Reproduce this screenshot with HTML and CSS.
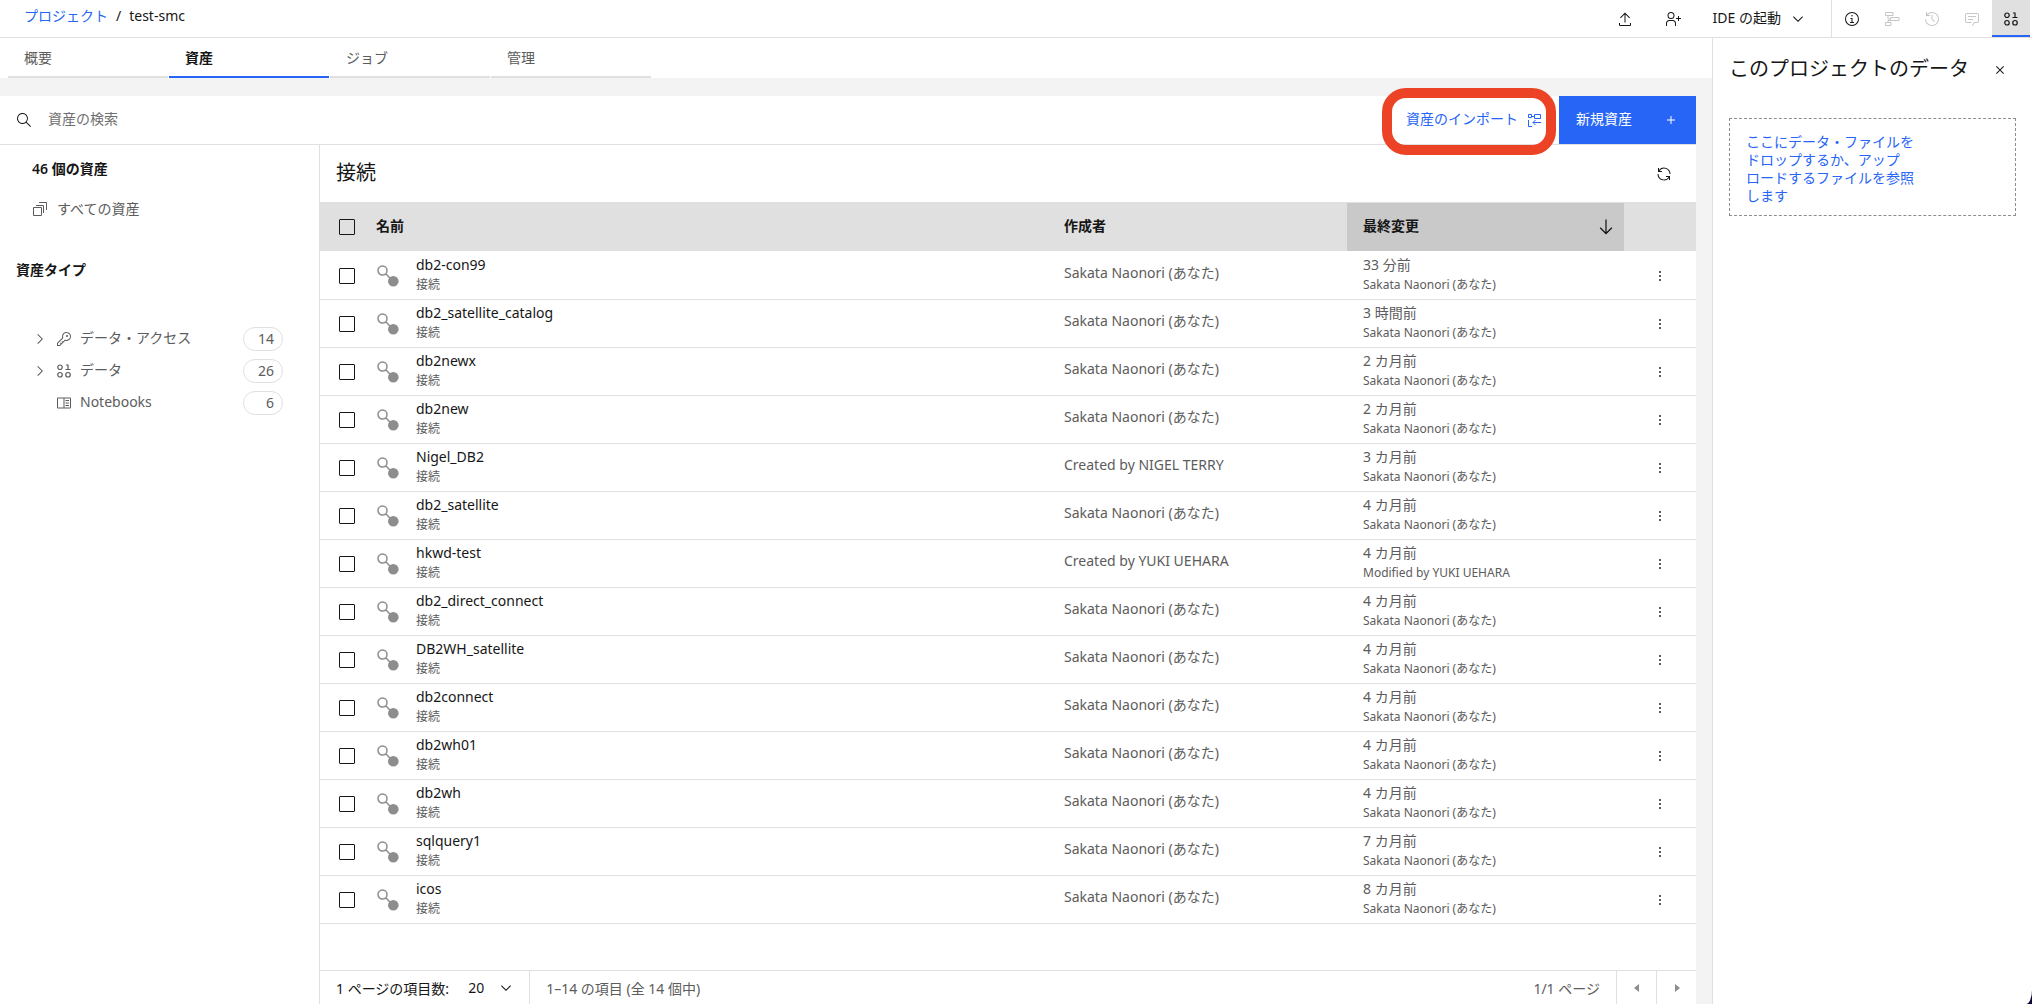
FILE: index.html
```
<!DOCTYPE html>
<html lang="ja">
<head>
    <meta charset="UTF-8">
    <meta name="viewport" content="width=device-width, initial-scale=1.0">
    <title>test-smc</title>
    <link rel="stylesheet" href="styles.css">
</head>
<body>
    <svg class="sprite" aria-hidden="true">
        <symbol id="i-share" viewBox="0 0 32 32"><path d="M6 13l1.410 1.410L15 6.830V23h2V6.830l7.590 7.580L26 13 16 3zM26 24v4H6v-4H4v4a2 2 0 002 2h20a2 2 0 002-2v-4z"/></symbol>
        <symbol id="i-user" viewBox="0 0 32 32"><path d="M32 14h-4v-4h-2v4h-4v2h4v4h2v-4h4zM12 4a5 5 0 11-5 5 5 5 0 015-5m0-2a7 7 0 107 7 7 7 0 00-7-7zM22 30h-2v-5a5 5 0 00-5-5H9a5 5 0 00-5 5v5H2v-5a7 7 0 017-7h6a7 7 0 017 7z"/></symbol>
        <symbol id="i-down" viewBox="0 0 16 16"><path d="M8 11L3 6l.7-.7L8 9.600l4.300-4.300.7.7z"/></symbol>
        <symbol id="i-right" viewBox="0 0 16 16"><path d="M11 8l-5 5-.7-.7L9.600 8 5.300 3.700 6 3z"/></symbol>
        <symbol id="i-info" viewBox="0 0 32 32"><path d="M17 22v-8h-4v2h2v6h-3v2h8v-2zM16 8a1.500 1.500 0 101.500 1.500A1.500 1.500 0 0016 8z"/><path d="M16 30a14 14 0 1114-14 14 14 0 01-14 14zm0-26a12 12 0 1012 12A12 12 0 0016 4z"/></symbol>
        <symbol id="i-flow" viewBox="0 0 32 32"><path fill="none" stroke="currentColor" stroke-width="2" d="M3 3h15v6H3zM13 13h17v6H13zM3 23h11v6H3zM8 9v7h5M8 23v-4h5"/></symbol>
        <symbol id="i-history" viewBox="0 0 32 32"><path d="M20.590 22L15 16.410V7h2v8.580l5 5.010zM16 2A13.940 13.940 0 006 6.230V2H4v8h8V8H7.080A12 12 0 114 16H2A14 14 0 1016 2z"/></symbol>
        <symbol id="i-chat" viewBox="0 0 32 32"><path d="M17.740 30L16 29l4-7h6a2 2 0 002-2V8a2 2 0 00-2-2H6a2 2 0 00-2 2v12a2 2 0 002 2h9v2H6a4 4 0 01-4-4V8a4 4 0 014-4h20a4 4 0 014 4v12a4 4 0 01-4 4h-4.840z"/><path d="M8 10h16v2H8zM8 16h10v2H8z"/></symbol>
        <symbol id="i-data" viewBox="0 0 32 32"><path fill="none" stroke="currentColor" stroke-width="2.400" d="M19 13h10M24 13V4h-4"/><g fill="none" stroke="currentColor" stroke-width="2.400"><circle cx="8" cy="8.500" r="4.500"/><circle cx="8" cy="23.500" r="4.500"/><circle cx="24" cy="23.500" r="4.500"/></g></symbol>
        <symbol id="i-search" viewBox="0 0 16 16"><path d="M15 14.300L10.700 10c1.900-2.300 1.600-5.800-.7-7.700S4.200.7 2.300 3 .7 8.800 3 10.700c2 1.700 5 1.700 7 0l4.300 4.300zM2 6.500C2 4 4 2 6.500 2S11 4 11 6.500 9 11 6.500 11 2 9 2 6.500z"/></symbol>
        <symbol id="i-close" viewBox="0 0 32 32"><path d="M24 9.400L22.600 8 16 14.600 9.400 8 8 9.400l6.600 6.600L8 22.600 9.400 24l6.600-6.600 6.600 6.600 1.400-1.400-6.600-6.600z"/></symbol>
        <symbol id="i-add" viewBox="0 0 32 32"><path d="M17 15V8h-2v7H8v2h7v7h2v-7h7v-2z"/></symbol>
        <symbol id="i-import" viewBox="0 0 16 16"><path fill="none" stroke="currentColor" d="M2.500 2.500h3v3h-3zM8.500 2.500h6v4h-6zM5.500 4.500h3M2.500 8v6.500H6M15 10.500H7M9.500 8L7 10.500 9.500 13"/></symbol>
        <symbol id="i-renew" viewBox="0 0 32 32"><path d="M12 10H6.780A11 11 0 0127 16h2A13 13 0 006 7.680V4H4v8h8zM20 22h5.220A11 11 0 015 16H3a13 13 0 0023 8.320V28h2v-8h-8z"/></symbol>
        <symbol id="i-stack" viewBox="0 0 16 16"><path fill="none" stroke="currentColor" d="M1.500 6.500h8v8h-8zM4 4.500h7.500V12M7 1.500h7.500V9"/></symbol>
        <symbol id="i-key" viewBox="0 0 32 32"><path d="M21 2a9 9 0 00-9 9 8.870 8.870 0 00.390 2.610L2 24v6h6l10.390-10.390A9 9 0 1021 2zm0 16a7 7 0 01-2-.300l-1.150-.350-.870.870-3.180 3.180L12.410 20 11 21.410l1.380 1.380-1.590 1.590L9.410 23 8 24.410l1.380 1.380L7.170 28H4v-3.170l9.800-9.800.870-.870-.350-1.150A7 7 0 1121 18z"/><circle cx="22" cy="10" r="2"/></symbol>
        <symbol id="i-book" viewBox="0 0 32 32"><path d="M19 10h7v2h-7zM19 15h7v2h-7zM19 20h7v2h-7z"/><path d="M28 5H4a2 2 0 00-2 2v18a2 2 0 002 2h24a2 2 0 002-2V7a2 2 0 00-2-2zM4 7h11v18H4zm13 18V7h11v18z"/></symbol>
        <symbol id="i-arrow" viewBox="0 0 32 32"><path d="M24.590 16.590L17 24.170V4h-2v20.170l-7.590-7.580L6 18l10 10 10-10z"/></symbol>
        <symbol id="i-conn" viewBox="0 0 22 22"><path fill="none" stroke="currentColor" stroke-width="1.500" d="M5.500 1a4.500 4.500 0 110 9 4.500 4.500 0 010-9zM8.700 8.700l5 5"/><circle cx="16.300" cy="16.300" r="5.300"/></symbol>
        <symbol id="i-dots" viewBox="0 0 16 16"><path d="M7 3h2v2H7zM7 7h2v2H7zM7 11h2v2H7z"/></symbol>
        <symbol id="i-prev" viewBox="0 0 16 16"><path d="M10 4v8L5 8z"/></symbol>
        <symbol id="i-next" viewBox="0 0 16 16"><path d="M6 4v8l5-4z"/></symbol>
    </svg>

    <header class="header">
        <nav class="breadcrumb">
            <a href="#">プロジェクト</a>
            <span>/</span>
            <span>test-smc</span>
        </nav>
        <div class="header-actions">
            <button class="icon-btn" aria-label="アップロード"><svg class="icon"><use href="#i-share"/></svg></button>
            <button class="icon-btn" aria-label="共同作業者の追加"><svg class="icon"><use href="#i-user"/></svg></button>
            <button class="ide-btn"><span class="label">IDE の起動</span> <svg class="icon"><use href="#i-down"/></svg></button>
        </div>
        <div class="header-tools">
            <button class="tool" aria-label="情報"><svg class="icon"><use href="#i-info"/></svg></button>
            <button class="tool" aria-label="フロー" disabled><svg class="icon"><use href="#i-flow"/></svg></button>
            <button class="tool" aria-label="履歴" disabled><svg class="icon"><use href="#i-history"/></svg></button>
            <button class="tool" aria-label="コメント" disabled><svg class="icon"><use href="#i-chat"/></svg></button>
            <button class="tool active" aria-label="データ"><svg class="icon"><use href="#i-data"/></svg></button>
        </div>
    </header>

    <div class="page">
        <main class="main">
            <nav class="tabs">
                <a class="tab" href="#">概要</a>
                <a class="tab active" href="#">資産</a>
                <a class="tab" href="#">ジョブ</a>
                <a class="tab" href="#">管理</a>
            </nav>

            <div class="workspace">
                <div class="toolbar">
                    <label class="search-label" for="search" aria-label="資産の検索"><svg class="icon"><use href="#i-search"/></svg></label>
                    <input class="search" id="search" type="text" placeholder="資産の検索">
                    <button class="import-btn"><span class="label">資産のインポート</span> <svg class="icon"><use href="#i-import"/></svg></button>
                    <button class="new-btn"><span class="label">新規資産</span> <svg class="icon"><use href="#i-add"/></svg></button>
                </div>

                <div class="content">
                    <aside class="sidebar">
                        <h2 class="asset-count">46 個の資産</h2>
                        <a class="all-assets" href="#"><svg class="icon"><use href="#i-stack"/></svg>すべての資産</a>
                        <h2 class="type-title">資産タイプ</h2>
                        <ul class="types">
                            <li>
                                <svg class="icon chevron"><use href="#i-right"/></svg>
                                <svg class="icon"><use href="#i-key"/></svg>
                                <a class="label" href="#">データ・アクセス</a>
                                <span class="badge">14</span>
                            </li>
                            <li>
                                <svg class="icon chevron"><use href="#i-right"/></svg>
                                <svg class="icon"><use href="#i-data"/></svg>
                                <a class="label" href="#">データ</a>
                                <span class="badge">26</span>
                            </li>
                            <li>
                                <span class="chevron"></span>
                                <svg class="icon"><use href="#i-book"/></svg>
                                <a class="label" href="#">Notebooks</a>
                                <span class="badge">6</span>
                            </li>
                        </ul>
                    </aside>

                    <section class="list">
                        <div class="list-header">
                            <h1>接続</h1>
                            <button class="icon-btn" aria-label="更新"><svg class="icon"><use href="#i-renew"/></svg></button>
                        </div>
                        <table class="table">
                            <colgroup>
                                <col class="col-check">
                                <col>
                                <col class="col-author">
                                <col class="col-date">
                                <col class="col-menu">
                            </colgroup>
                            <thead>
                                <tr>
                                    <th><input type="checkbox" aria-label="すべて選択"></th>
                                    <th><span class="label">名前</span></th>
                                    <th><span class="label">作成者</span></th>
                                    <th class="sorted"><button class="sort-btn"><span class="label">最終変更</span> <svg class="icon"><use href="#i-arrow"/></svg></button></th>
                                    <th></th>
                                </tr>
                            </thead>
                            <tbody id="rows"></tbody>
                        </table>
                        <footer class="pager">
                            <div class="page-size">
                                <label for="pageSize">1 ページの項目数:</label>
                                <span class="select-wrap">
                                    <select id="pageSize"><option>20</option><option>50</option></select>
                                    <svg class="icon"><use href="#i-down"/></svg>
                                </span>
                            </div>
                            <span class="range">1–14 の項目 (全 14 個中)</span>
                            <span class="page-no">1/1 ページ</span>
                            <button class="page-btn" aria-label="前のページ" disabled><svg class="icon"><use href="#i-prev"/></svg></button>
                            <button class="page-btn" aria-label="次のページ" disabled><svg class="icon"><use href="#i-next"/></svg></button>
                        </footer>
                    </section>
                </div>
            </div>
        </main>

        <aside class="panel">
            <div class="panel-header">
                <h2 class="label">このプロジェクトのデータ</h2>
                <button class="icon-btn" aria-label="閉じる"><svg class="icon"><use href="#i-close"/></svg></button>
            </div>
            <div class="dropzone">
                <a href="#">ここにデータ・ファイルを<br>ドロップするか、アップ<br>ロードするファイルを参照<br>します</a>
            </div>
        </aside>
    </div>

    <script>
        const me = 'Sakata Naonori (あなた)';
        const rows = [
            ['db2-con99', me, '33 分前', me],
            ['db2_satellite_catalog', me, '3 時間前', me],
            ['db2newx', me, '2 カ月前', me],
            ['db2new', me, '2 カ月前', me],
            ['Nigel_DB2', 'Created by NIGEL TERRY', '3 カ月前', me],
            ['db2_satellite', me, '4 カ月前', me],
            ['hkwd-test', 'Created by YUKI UEHARA', '4 カ月前', 'Modified by YUKI UEHARA'],
            ['db2_direct_connect', me, '4 カ月前', me],
            ['DB2WH_satellite', me, '4 カ月前', me],
            ['db2connect', me, '4 カ月前', me],
            ['db2wh01', me, '4 カ月前', me],
            ['db2wh', me, '4 カ月前', me],
            ['sqlquery1', me, '7 カ月前', me],
            ['icos', me, '8 カ月前', me]
        ];

        document.getElementById('rows').innerHTML = rows.map(([name, author, date, editor]) => `
            <tr>
                <td class="check"><input type="checkbox" aria-label="${name}"></td>
                <td>
                    <div class="asset">
                        <svg class="conn"><use href="#i-conn"/></svg>
                        <div><a href="#">${name}</a><small>接続</small></div>
                    </div>
                </td>
                <td class="author">${author}</td>
                <td>${date}<small>${editor}</small></td>
                <td class="menu"><button class="icon-btn" aria-label="メニュー"><svg class="icon"><use href="#i-dots"/></svg></button></td>
            </tr>`).join('');
    </script>
</body>
</html>
```
FILE: styles.css
```
:root {
    --blue: #2765f6;
    --text: #161616;
    --muted: #5c5c5c;
    --border: #e0e0e0;
    --bg: #f3f3f3;
}

* {
    margin: 0;
    padding: 0;
    box-sizing: border-box;
}

html {
    background: #0c0638;
}

body {
    height: 100vh;
    display: flex;
    flex-direction: column;
    overflow: hidden;
    font-family: "Noto Sans", "Noto Sans CJK JP", sans-serif;
    font-size: 14px;
    line-height: 19px;
    color: var(--text);
    background: #fff;
    border-bottom-right-radius: 6px 14px;
}

a {
    color: inherit;
    text-decoration: none;
}

button,
input,
select {
    font: inherit;
    color: inherit;
    background: none;
    border: none;
}

button {
    cursor: pointer;
}

h1,
h2 {
    font-size: 14px;
    font-weight: 600;
}

.sprite {
    display: none;
}

.icon {
    width: 16px;
    height: 16px;
    flex: none;
    fill: currentColor;
}

/* text next to an icon sits slightly above the centre line */
.label {
    padding-bottom: 3px;
}

.icon-btn {
    width: 32px;
    height: 32px;
    display: flex;
    align-items: center;
    justify-content: center;
}

/* header */
.header {
    display: flex;
    height: 38px;
    flex: none;
    border-bottom: 1px solid var(--border);
}

.breadcrumb {
    display: flex;
    gap: 8px;
    padding: 6px 24px;
    flex: 1;
}

.breadcrumb a {
    color: var(--blue);
}

.header-actions {
    display: flex;
    align-items: center;
    gap: 16px;
    padding-right: 25px;
}

.ide-btn {
    display: flex;
    align-items: center;
    gap: 9px;
    margin-left: 8px;
}

.header-tools {
    display: flex;
    padding-right: 2px;
    border-left: 1px solid var(--border);
}

.tool {
    width: 40px;
    display: flex;
    align-items: center;
    justify-content: center;
}

.tool:disabled {
    color: #c6c6c6;
}

.tool.active {
    width: 38px;
    background: var(--border);
    box-shadow: inset 0 -2px var(--blue);
}

.page {
    display: flex;
    flex: 1;
    min-height: 0;
}

.main {
    display: flex;
    flex-direction: column;
    flex: 1;
    min-width: 0;
    background: var(--bg);
}

/* tabs */
.tabs {
    display: flex;
    gap: 1px;
    flex: none;
    height: 40px;
    padding-left: 8px;
    background: #fff;
}

.tab {
    width: 160px;
    padding: 10px 16px;
    color: var(--muted);
    border-bottom: 2px solid var(--border);
}

.tab.active {
    color: var(--text);
    font-weight: 600;
    border-color: var(--blue);
}

.workspace {
    display: flex;
    flex-direction: column;
    flex: 1;
    min-height: 0;
    margin: 18px 16px 0 0;
    background: #fff;
}

.toolbar {
    display: flex;
    align-items: center;
    flex: none;
    height: 49px;
    border-bottom: 1px solid var(--border);
}

.search-label {
    display: flex;
    padding: 0 16px;
}

.search {
    flex: 1;
    height: 40px;
    padding-bottom: 4px;
    outline: none;
}

.search::placeholder {
    color: #6f6f6f;
    opacity: 1;
}

/* outlined with the highlight frame */
.import-btn {
    display: flex;
    align-items: center;
    position: relative;
    z-index: 1;
    flex: none;
    gap: 8px;
    height: 67px;
    padding: 0 4px 3px 14px;
    margin: 3px 3px 0 0;
    color: var(--blue);
    border: 10px solid #ec4226;
    border-radius: 24px;
}

.new-btn {
    display: flex;
    align-items: center;
    justify-content: space-between;
    width: 137px;
    height: 48px;
    padding: 0 17px;
    color: #fff;
    background: var(--blue);
}

.content {
    display: flex;
    flex: 1;
    min-height: 0;
}

/* sidebar */
.sidebar {
    width: 320px;
    flex: none;
    padding: 14px 36px 0 16px;
    color: var(--muted);
    border-right: 1px solid var(--border);
}

.sidebar h2 {
    color: var(--text);
}

.asset-count {
    padding-left: 16px;
}

.all-assets {
    display: flex;
    align-items: center;
    gap: 9px;
    padding-left: 16px;
    margin: 21px 0 42px;
}

.types {
    list-style: none;
    margin-top: 44px;
}

.types li {
    display: flex;
    align-items: center;
    gap: 8px;
    height: 32px;
    padding-left: 16px;
}

.types a {
    flex: 1;
}

.chevron {
    width: 16px;
}

.badge {
    width: 40px;
    height: 24px;
    padding-right: 8px;
    line-height: 22px;
    text-align: right;
    border: 1px solid var(--border);
    border-radius: 12px;
}

/* asset list */
.list {
    display: flex;
    flex-direction: column;
    flex: 1;
    min-width: 0;
}

.list-header {
    display: flex;
    align-items: center;
    justify-content: space-between;
    height: 57px;
    padding: 0 16px;
}

.list-header h1 {
    padding-bottom: 3px;
    font-size: 20px;
    font-weight: 400;
}

.table {
    width: 100%;
    table-layout: fixed;
    border-spacing: 0;
    color: var(--muted);
}

.col-check {
    width: 40px;
}

.col-author {
    width: 299px;
}

.col-date {
    width: 277px;
}

.col-menu {
    width: 72px;
}

th {
    height: 50px;
    padding: 0 16px;
    text-align: left;
    font-weight: 600;
    color: var(--text);
    background: var(--border);
    background-clip: padding-box;
    border-top: 1px solid var(--border);
    border-bottom: 1px solid #fff;
}

th .label {
    display: block;
}

th.sorted {
    padding-right: 8px;
    background-color: #c9c9c9;
}

th:first-child,
td.check {
    padding: 0 0 0 19px;
}

.sort-btn {
    display: flex;
    justify-content: space-between;
    align-items: center;
    width: 100%;
    font-weight: 600;
}

.sort-btn .icon {
    width: 20px;
    height: 20px;
}

td {
    height: 48px;
    padding: 3px 16px;
    vertical-align: top;
    border-bottom: 1px solid var(--border);
}

td.check,
td.menu {
    vertical-align: middle;
}

td.author {
    padding-top: 11px;
}

td.menu {
    padding: 0 20px;
}

small {
    display: block;
    margin-top: 1px;
    font-size: 12px;
}

input[type="checkbox"] {
    appearance: none;
    display: block;
    width: 16px;
    height: 16px;
    border: 1px solid var(--text);
    border-radius: 1px;
}

.asset {
    display: flex;
    gap: 17px;
    padding-left: 1px;
}

.asset a {
    color: var(--text);
}

.conn {
    width: 22px;
    height: 22px;
    margin-top: 10px;
    color: #8d8d8d;
    fill: currentColor;
}

/* pagination */
.pager {
    display: flex;
    height: 34px;
    margin-top: auto;
    line-height: 36px;
    color: var(--muted);
    border-top: 1px solid var(--border);
}

.page-size {
    display: flex;
    padding: 0 15px 0 16px;
    gap: 19px;
    color: var(--text);
    border-right: 1px solid var(--border);
}

.select-wrap {
    display: flex;
    align-items: center;
}

.select-wrap select {
    appearance: none;
    width: 46px;
    padding-right: 16px;
    margin-right: -16px;
}

.select-wrap .icon {
    pointer-events: none;
}

.range {
    flex: 1;
    padding-left: 16px;
}

.page-no {
    padding-right: 16px;
}

.page-btn {
    display: flex;
    align-items: center;
    justify-content: center;
    width: 40px;
    color: #8d8d8d;
    border-left: 1px solid var(--border);
}

/* data panel */
.panel {
    width: 320px;
    flex: none;
    padding: 16px;
    border-left: 1px solid var(--border);
}

.panel-header {
    display: flex;
    align-items: center;
    justify-content: space-between;
}

.panel-header h2 {
    font-size: 20px;
    font-weight: 400;
    white-space: nowrap;
}

.dropzone {
    margin-top: 32px;
    padding: 14px 16px 10px;
    line-height: 18px;
    color: var(--blue);
    border: 1px dashed #8d8d8d;
}

.dropzone a {
    display: block;
}
```
